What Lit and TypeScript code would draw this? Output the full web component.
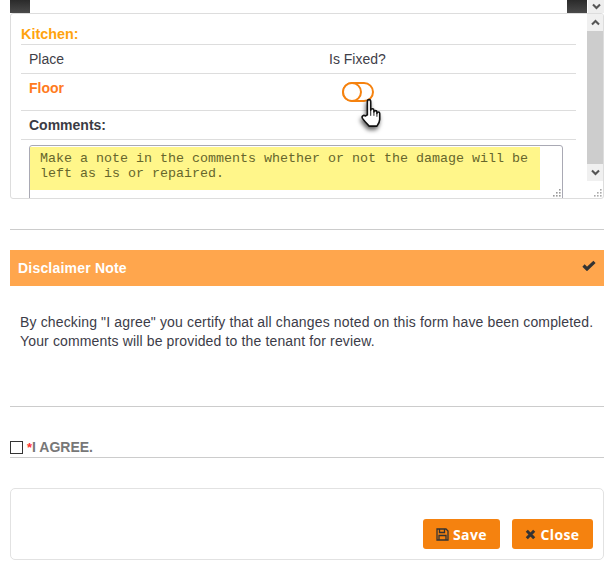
import { LitElement, html, css, svg } from "lit";
import { customElement } from "lit/decorators.js";

const chevron = (up: boolean) => html`<svg class="chev" width="9" height="7" viewBox="0 0 9 7">
  <path d=${up ? "M1 5.500 4.500 2 8 5.500" : "M1 1.500 4.500 5 8 1.500"} fill="none" stroke="#555" stroke-width="2.100"/></svg>`;

const grip = (color: string) => html`<svg class="grip" width="9" height="9" viewBox="0 0 9 9">
  ${[[7,1],[4,4],[7,4],[1,7],[4,7],[7,7]].map(([x,y]) => svg`<rect x=${x} y=${y} width="1.6" height="1.6" fill=${color}/>`)}
</svg>`;

@customElement("app-root")
export class AppRoot extends LitElement {
  static styles = css`
    :host { display: block; width: 615px; height: 564px; overflow: hidden; background: #fff; box-sizing: border-box;
      padding: 0 11px 0 10px; font-family: "Liberation Sans", Arial, sans-serif; color: #333; font-size: 14px; }
    *, *::before { box-sizing: border-box; }
    .strip { display: flex; height: 13px; padding-left: 0; }
    .dark { width: 20px; background: linear-gradient(#2a2a2a, #4a4a4a); }
    .spacer { flex: 1; }
    .strip-arrow { width: 16px; margin-left: 1px; background: #eee; display: flex; align-items: center; justify-content: center; }
    .panel { position: relative; height: 186px; display: flex; border: 1px solid #ddd; border-radius: 3px; overflow: hidden; }
    .main { flex: 1; padding: 0 0 0 10px; min-width: 0; }
    .scroll { width: 16px; display: flex; flex-direction: column; height: 167px; background: #f0f0f0; }
    .arrow { height: 17px; display: flex; align-items: center; justify-content: center; }
    .thumb { flex: 1; background: #cdcdcd; }
    .grip { display: block; }
    .corner { position: absolute; right: 1px; bottom: 1px; }
    .kitchen { height: 31px; padding-top: 13px; font-weight: bold; font-size: 14.4px; line-height: 14px; color: #ffa30f; border-bottom: 1px solid #ddd; width: 555px; }
    .row { width: 555px; border-bottom: 1px solid #ddd; padding-left: 8px; display: flex; }
    .r1 { height: 29px; align-items: center; padding-bottom: 1px; color: #3f4048; }
    .r2 { height: 37px; padding-top: 6px; position: relative; }
    .r3 { height: 29px; align-items: center; font-weight: bold; color: #3b3b44; }
    .c1 { width: 300px; }
    .floor { color: #ff7a20; font-weight: bold; line-height: 16px; }
    .toggle { position: absolute; left: 321px; top: 8px; width: 32px; height: 20px; border: 2px solid #f5820f; border-radius: 10px; }
    .toggle::before { content: ""; position: absolute; left: -2px; top: -2px; width: 20px; height: 20px; border: 2px solid #f5820f; border-radius: 50%; background: #fff; }
    .hand { position: absolute; left: 340px; top: 24px; filter: drop-shadow(-1px 3px 2px rgba(0,0,0,.6)); z-index: 2; overflow: visible; }
    .ta-wrap { padding: 5px 13px 0 8px; width: 555px; }
    .ta { position: relative; height: 60px; border: 1px solid #a9a9b4; border-radius: 3px; padding: 1px 0 0 0; font-family: "Liberation Mono", "Courier New", monospace; font-size: 13.33px; line-height: 15px; color: #66662c; }
    .mark { background: #fff68a; width: 510px; height: 43px; padding: 4px 0 0 10px; white-space: pre; }
    .ta .grip { position: absolute; right: 1px; bottom: 7px; }
    hr { margin: 0; border: 0; height: 1px; background: #ccc; }
    .hr1 { margin-top: 30px; }
    .bar { margin-top: 20px; height: 36px; background: #ffa64d; color: #fff; font-weight: bold; font-size: 14px; letter-spacing: .2px; display: flex; align-items: center; padding: 0 8px; justify-content: space-between; }
    .bar svg { margin: -5px 0 0; }
    .note { padding: 27px 10px 0; height: 120px; line-height: 19px; font-size: 14px; letter-spacing: .145px; color: #3c3c48; white-space: pre; }
    .agree { margin-top: 33px; height: 18px; display: flex; align-items: center; border-bottom: 1px solid #ccc; font-weight: bold; font-size: 14px; color: #777; padding-bottom: 3px; }
    .box { width: 13px; height: 13px; border: 1px solid #333; margin-right: 4px; }
    .req { color: #f33; font-size: 13px; }
    .foot { margin-top: 30px; height: 72px; border: 1px solid #e2e2e2; border-radius: 5px; display: flex; justify-content: flex-end; align-items: flex-end; gap: 12px; padding: 0 10px 10px 0; }
    .btn { height: 30px; background: #f5820f; border: 0; border-radius: 3px; color: #fff; font-family: "Open Sans", sans-serif; font-weight: 700; font-size: 14px; display: flex; align-items: center; justify-content: center; gap: 4px; padding: 0; letter-spacing: .4px; }
    .save { width: 77px; }
    .close { width: 81px; }
  `;

  render() {
    return html`
      <div class="strip">
        <div class="dark"></div><div class="spacer"></div><div class="dark"></div>
        <div class="strip-arrow">${chevron(false)}</div>
      </div>
      <div class="panel">
        <div class="main">
          <div class="kitchen">Kitchen:</div>
          <div class="row r1"><span class="c1">Place</span><span>Is Fixed?</span></div>
          <div class="row r2">
            <span class="floor">Floor</span>
            <div class="toggle"></div>
            <svg class="hand" width="23" height="30" viewBox="0 0 24 32">
              <path d="M6.500 18V4c0-3 3.600-3 3.600 0v9c0-2 3.400-2 3.400 0v2c0-2 3.200-2 3.200 0v1.500c0-2 3-2 3 0V23c0 3-1.500 5-3 7H8.500C6 27.500 3.500 25 1.300 21.700c-1.300-2.200 1.200-4 3-2.500z" fill="#fff" stroke="#111" stroke-width="1.700" stroke-linejoin="round"/>
              <path d="M10.100 13v6M13.500 15v4M16.700 16.500V20" fill="none" stroke="#111" stroke-width="1"/>
            </svg>
          </div>
          <div class="row r3">Comments:</div>
          <div class="ta-wrap">
            <div class="ta">
              <div class="mark">Make a note in the comments whether or not the damage will be
left as is or repaired.</div>
              ${grip("#999")}
            </div>
          </div>
        </div>
        <div class="scroll">
          <div class="arrow">${chevron(true)}</div>
          <div class="thumb"></div>
          <div class="arrow">${chevron(false)}</div>
        </div>
        <div class="corner">${grip("#aaa")}</div>
      </div>
      <hr class="hr1" />
      <div class="bar">
        <span>Disclaimer Note</span>
        <svg width="14" height="11" viewBox="0 0 14 11"><path d="M1.500 5.500 5 9 12.500 1.800" fill="none" stroke="#333" stroke-width="3.200"/></svg>
      </div>
      <div class="note">By checking "I agree" you certify that all changes noted on this form have been completed.
Your comments will be provided to the tenant for review.</div>
      <hr />
      <div class="agree"><div class="box"></div><span class="req">*</span>I AGREE.</div>
      <div class="foot">
        <button class="btn save">
          <svg width="13" height="13" viewBox="0 0 13 13"><path d="M1 1h9l2 2v9H1zM3.500 1v3.500h5V1M3 12V7.500h7V12" fill="none" stroke="#333" stroke-width="1.300"/></svg>
          Save
        </button>
        <button class="btn close">
          <svg width="11" height="11" viewBox="0 0 11 11"><path d="M1.800 1.800l7.400 7.400M9.200 1.800 1.800 9.200" fill="none" stroke="#333" stroke-width="3"/></svg>
          Close
        </button>
      </div>
    `;
  }
}
